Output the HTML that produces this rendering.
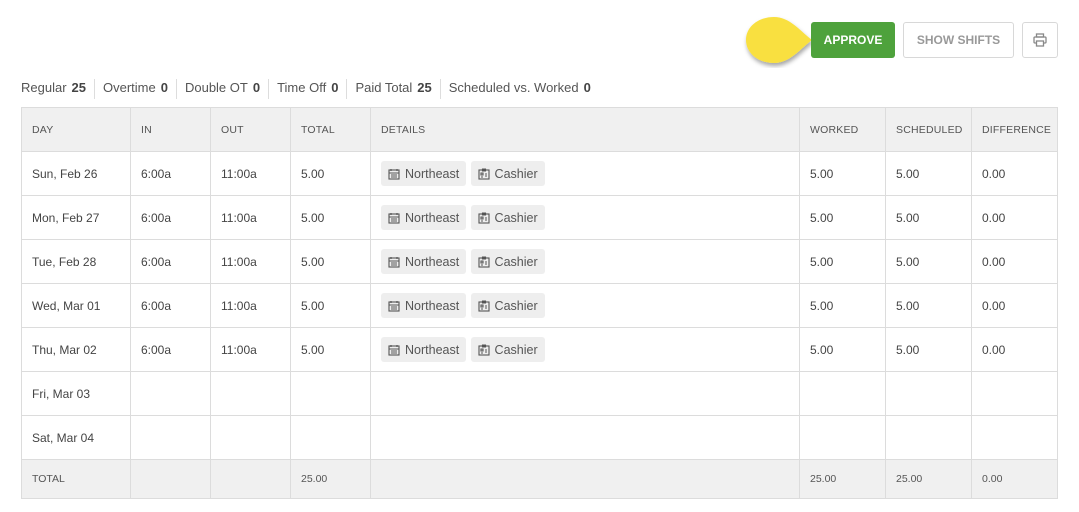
<!DOCTYPE html>
<html><head><meta charset="utf-8"><style>
*{margin:0;padding:0;box-sizing:border-box}
body{width:1079px;height:512px;background:#fff;font-family:"Liberation Sans",sans-serif;color:#444;position:relative;overflow:hidden}
.btn{position:absolute;top:22px;height:36px;border-radius:3px;font-size:12px;font-weight:bold;display:flex;align-items:center;justify-content:center}
.ap{left:811px;width:84px;background:#4ea23c;color:#fff}
.ss{left:903px;width:111px;border:1px solid #d8d8d8;color:#999}
.pr{left:1022px;width:36px;border:1px solid #d8d8d8}
.sum{position:absolute;top:79px;left:21px;font-size:13px;color:#555;display:flex}
.sum span{padding:0 8px;border-left:1px solid #ddd;height:20px;line-height:16px;padding-top:1px}
.sum span:first-child{padding-left:0;border:none}
.sum b{color:#444;margin-left:5px}
table{position:absolute;left:21px;top:107px;border-collapse:collapse;table-layout:fixed;width:1036px}
td,th{border:1px solid #dcdcdc;font-size:12px;padding:0 10px;text-align:left;vertical-align:middle}
th{background:#f0f0f0;height:44px;font-weight:normal;font-size:10.5px;color:#555;letter-spacing:.2px}
td{height:44px}
tr.t td{background:#f0f0f0;height:39px;font-size:10.5px;color:#555}
.tag{display:inline-flex;align-items:center;background:#eee;border-radius:3px;height:25px;padding:0 7px;margin-right:1px;font-size:12.5px;color:#555}
.tag svg{margin-right:5px}
</style></head><body>
<svg style="position:absolute;left:741px;top:11px" width="74" height="60"><defs><filter id="s"><feDropShadow dx="1" dy="3" stdDeviation="2" flood-opacity=".35"/></filter></defs><path d="M33 6 C49 6 59 20 71 29 C59 38 49 52 33 52 C17 52 5 42 5 29 C5 16 17 6 33 6Z" fill="#f9e03f" filter="url(#s)"/></svg>
<div class="btn ap">APPROVE</div>
<div class="btn ss">SHOW SHIFTS</div>
<div class="btn pr"><svg width="14" height="14" viewBox="0 0 14 14" fill="none" stroke="#888" stroke-width="1.3"><rect x="3.5" y="1" width="7" height="3"/><rect x="1" y="4" width="12" height="6" rx="1"/><rect x="3.5" y="8" width="7" height="5" fill="#fff"/></svg></div>
<div class="sum"><span>Regular<b>25</b></span><span>Overtime<b>0</b></span><span>Double OT<b>0</b></span><span>Time Off<b>0</b></span><span>Paid Total<b>25</b></span><span>Scheduled vs. Worked<b>0</b></span></div>
<table>
<colgroup><col style="width:109px"><col style="width:80px"><col style="width:80px"><col style="width:80px"><col style="width:429px"><col style="width:86px"><col style="width:86px"><col style="width:86px"></colgroup>
<tr><th>DAY</th><th>IN</th><th>OUT</th><th>TOTAL</th><th>DETAILS</th><th>WORKED</th><th>SCHEDULED</th><th>DIFFERENCE</th></tr>
<tr><td>Sun, Feb 26</td><td>6:00a</td><td>11:00a</td><td>5.00</td><td class="d"></td><td>5.00</td><td>5.00</td><td>0.00</td></tr>
<tr><td>Mon, Feb 27</td><td>6:00a</td><td>11:00a</td><td>5.00</td><td class="d"></td><td>5.00</td><td>5.00</td><td>0.00</td></tr>
<tr><td>Tue, Feb 28</td><td>6:00a</td><td>11:00a</td><td>5.00</td><td class="d"></td><td>5.00</td><td>5.00</td><td>0.00</td></tr>
<tr><td>Wed, Mar 01</td><td>6:00a</td><td>11:00a</td><td>5.00</td><td class="d"></td><td>5.00</td><td>5.00</td><td>0.00</td></tr>
<tr><td>Thu, Mar 02</td><td>6:00a</td><td>11:00a</td><td>5.00</td><td class="d"></td><td>5.00</td><td>5.00</td><td>0.00</td></tr>
<tr><td>Fri, Mar 03</td><td></td><td></td><td></td><td></td><td></td><td></td><td></td></tr>
<tr><td>Sat, Mar 04</td><td></td><td></td><td></td><td></td><td></td><td></td><td></td></tr>
<tr class="t"><td>TOTAL</td><td></td><td></td><td>25.00</td><td></td><td>25.00</td><td>25.00</td><td>0.00</td></tr>
</table>
<script>
var h='<span class="tag"><svg width="12" height="12" viewBox="0 0 12 12" fill="none" stroke="#555" stroke-width="1.1"><rect x="1" y="2" width="10" height="9"/><path d="M1 5h10M3 1v2M9 1v2M3 7h6M3 9h6"/></svg>Northeast</span> <span class="tag"><svg width="12" height="12" viewBox="0 0 12 12" fill="none" stroke="#555" stroke-width="1.1"><rect x="1" y="2" width="10" height="9"/><path d="M4.5 1h3v2h-3zM3 5h2v2H3zM3 9h2M7 6h2M7 8h2"/></svg>Cashier</span>';
document.querySelectorAll('td.d').forEach(function(e){e.innerHTML=h});
</script>
</body></html>
